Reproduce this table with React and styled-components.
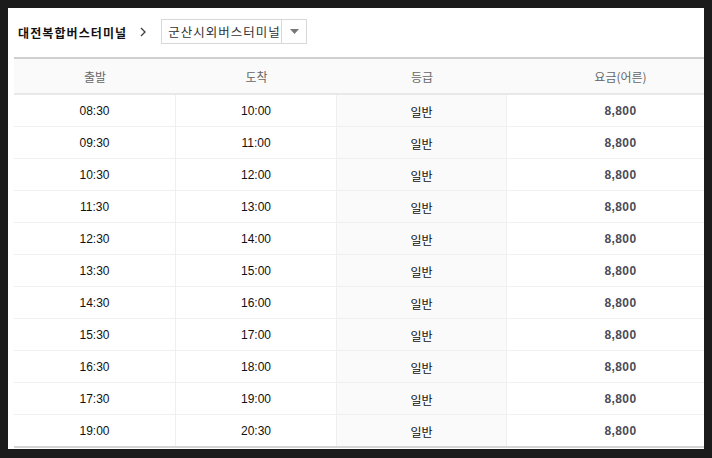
import React from "react";
import styled, { createGlobalStyle } from "styled-components";

const Global = createGlobalStyle`
  html, body { margin: 0; padding: 0; background: #1b1b1b; }
  body { padding: 8px; font-family: "Noto Sans CJK KR", "Noto Sans", sans-serif; }
`;

const Panel = styled.div`
  width: 696px;
  height: 441px;
  background: #fff;
  overflow: hidden;
  box-sizing: border-box;
  padding: 0 0 0 6px;
`;

const Header = styled.div`
  display: flex;
  align-items: center;
  height: 49px;
  padding: 0 0 0 4px;
  box-sizing: border-box;
`;

const Title = styled.span`
  font-size: 12px;
  font-weight: 700;
  color: #111;
  letter-spacing: 1.1px;
`;

const Chevron = styled.span`
  margin: -2px 14px 0 12px;
  display: inline-flex;
  width: 8px;
  height: 10px;
`;

const Select = styled.div`
  display: flex;
  align-items: stretch;
  height: 25px;
  box-sizing: border-box;
  border: 1px solid #d8d8d8;
  margin-top: -2px;
`;

const SelectText = styled.span`
  display: flex;
  align-items: center;
  padding: 0 0 0 6px;
  font-size: 12.5px;
  color: #333;
  letter-spacing: 1px;
  width: 113px;
`;

const SelectBtn = styled.span`
  width: 24px;
  border-left: 1px solid #d8d8d8;
  display: flex;
  align-items: center;
  justify-content: center;
`;

const Table = styled.div`
  width: 720px;
  border-top: 2px solid #cfcfcf;
  border-bottom: 2px solid #d4d4d4;
`;

const Row = styled.div`
  display: grid;
  grid-template-columns: 162px 161px 170px 227px;
  height: ${(p) => (p.$head ? "36px" : "32px")};
  box-sizing: border-box;
  background: ${(p) => (p.$head ? "#fafafa" : "#fff")};
  border-bottom: ${(p) => (p.$head ? "2px solid #e8e8e8" : "1px solid #f0f0f0")};
  &:last-child { border-bottom: none; height: 31px; }
`;

const HeadCell = styled.div`
  display: flex;
  align-items: center;
  justify-content: center;
  font-size: 12px;
  color: #666;
`;

const Cell = styled.div`
  display: flex;
  align-items: center;
  justify-content: center;
  font-size: 12px;
  color: ${(p) => (p.$price ? "#4b4b58" : "#111")};
  font-weight: ${(p) => (p.$price ? 700 : 400)};
  letter-spacing: ${(p) => (p.$price ? "0.4px" : "0")};
  font-family: ${(p) =>
    p.$korean ? '"Noto Sans CJK KR", sans-serif' : '"Liberation Sans", Arial, sans-serif'};
  background: ${(p) => (p.$shade ? "#fafafa" : "transparent")};
  border-right: ${(p) => (p.$last ? "none" : "1px solid #efefef")};
  padding-top: 1px;
`;

const rows = [
  ["08:30", "10:00"],
  ["09:30", "11:00"],
  ["10:30", "12:00"],
  ["11:30", "13:00"],
  ["12:30", "14:00"],
  ["13:30", "15:00"],
  ["14:30", "16:00"],
  ["15:30", "17:00"],
  ["16:30", "18:00"],
  ["17:30", "19:00"],
  ["19:00", "20:30"],
];

export default function App() {
  return (
    <>
      <Global />
      <Panel>
        <Header>
          <Title>대전복합버스터미널</Title>
          <Chevron>
            <svg width="8" height="10" viewBox="0 0 8 10">
              <path d="M2 1 L6 5 L2 9" fill="none" stroke="#444" strokeWidth="1.4" />
            </svg>
          </Chevron>
          <Select>
            <SelectText>군산시외버스터미널</SelectText>
            <SelectBtn>
              <svg width="9" height="5" viewBox="0 0 9 5">
                <path d="M0 0 H9 L4.5 5 Z" fill="#777" />
              </svg>
            </SelectBtn>
          </Select>
        </Header>
        <Table>
          <Row $head>
            <HeadCell>출발</HeadCell>
            <HeadCell>도착</HeadCell>
            <HeadCell>등급</HeadCell>
            <HeadCell>요금(어른)</HeadCell>
          </Row>
          {rows.map(([d, a]) => (
            <Row key={d}>
              <Cell>{d}</Cell>
              <Cell>{a}</Cell>
              <Cell $korean $shade>일반</Cell>
              <Cell $price $last>8,800</Cell>
            </Row>
          ))}
        </Table>
      </Panel>
    </>
  );
}
